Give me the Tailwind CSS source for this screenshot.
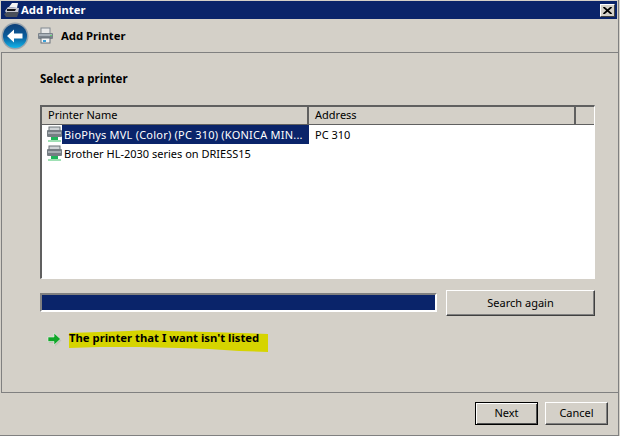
<!DOCTYPE html>
<html lang="en">
<head>
    <meta charset="UTF-8">
    <title>Add Printer</title>
    <script src="https://cdn.jsdelivr.net/npm/@tailwindcss/browser@4"></script>
</head>
<body class="bg-[#d4d0c8] font-['Noto_Sans','Liberation_Sans',sans-serif] text-[11px] text-black overflow-hidden">
    <div class="w-[619px] h-[436px] flex flex-col border-r border-b border-[#808080] pt-px">
        <!-- title bar -->
        <div class="h-[18px] ml-px mr-px bg-[#0a246a] flex items-center text-white font-bold text-[11.3px] shrink-0">
            <svg class="w-[17px] h-[16px] ml-[2px] mr-[1px]" viewBox="0 0 17 16">
                <path d="M6 5 L9 1 L15 1 L14 6 Z" fill="#f4f4f4"/>
                <path d="M2 9 L5 5 L16 6 L15 11 L4 12 Z" fill="#c8c8d0"/>
                <path d="M1 12 L4 10 L16 10 L14 15 L3 15 Z" fill="#4a4f5a"/>
                <path d="M4 7 L13 7 L12 9 L4 9 Z" fill="#15151a"/>
            </svg>
            <span class="leading-none">Add Printer</span>
            <button class="ml-auto mr-[2px] w-[15px] h-[13px] bg-[#d4d0c8] border border-white border-r-[#404040] border-b-[#404040] flex items-center justify-center">
                <svg class="w-[9px] h-[7px]" viewBox="0 0 9 7"><path d="M0.5 0 L8.5 7 M8.5 0 L0.5 7" stroke="#000" stroke-width="1.8"/></svg>
            </button>
        </div>

        <!-- header with back button -->
        <div class="h-[33px] flex items-center shrink-0 pl-[1px]">
            <svg class="w-[28px] h-[28px]" viewBox="0 0 28 28">
                <defs>
                    <linearGradient id="backFill" x1="0" y1="0" x2="0" y2="1">
                        <stop offset="0" stop-color="#0d3f78"/>
                        <stop offset="0.55" stop-color="#0a5f9e"/>
                        <stop offset="1" stop-color="#12b5ea"/>
                    </linearGradient>
                </defs>
                <circle cx="14" cy="14" r="13.5" fill="#9aa4ac"/>
                <circle cx="14" cy="14" r="12" fill="url(#backFill)"/>
                <path d="M6 14 L13 7.5 L13 11.5 L21.5 11.5 L21.5 16.5 L13 16.5 L13 20.5 Z" fill="#fff"/>
            </svg>
            <svg class="w-[17px] h-[17px] ml-[8px]" viewBox="0 0 17 17">
                <rect x="4" y="1" width="9" height="6" fill="#e8e8e8" stroke="#808890"/>
                <rect x="1" y="6" width="15" height="6" rx="1" fill="#7b838b"/>
                <rect x="2" y="7" width="13" height="2" fill="#a8b0b8"/>
                <rect x="4" y="11" width="9" height="5" fill="#f4f4f4" stroke="#68707a"/>
                <rect x="6" y="13" width="3" height="2" fill="#3aa0d8"/>
                <rect x="13" y="8" width="2" height="1" fill="#5fd070"/>
            </svg>
            <span class="ml-[7px] font-bold text-[11.3px] leading-none">Add Printer</span>
        </div>

        <!-- content panel -->
        <div class="h-[341px] shrink-0 border-y border-l border-[#808080] ml-px pl-[38px] pr-[22px] flex flex-col relative">
            <h2 class="font-bold text-[11.5px] leading-none mt-[20px]">Select a printer</h2>

            <div class="mt-[20px] w-[555px] h-[174px] bg-white border-t-2 border-l-2 border-t-[#606060] border-l-[#606060] border-r border-b border-r-white border-b-white flex flex-col">
                <div class="h-[18px] flex bg-[#d4d0c8] border-b border-[#606060] shrink-0">
                    <div class="w-[267px] pl-[6px] border-r-2 border-[#606060] leading-[15px]">Printer Name</div>
                    <div class="w-[267px] pl-[6px] border-r-2 border-[#606060] leading-[15px]">Address</div>
                    <div class="flex-1"></div>
                </div>
                <div class="h-[19px] flex items-center">
                    <svg class="w-[17px] h-[17px] ml-[4px] mr-[-1px] shrink-0" viewBox="0 0 17 17">
                        <rect x="3" y="1" width="11" height="4" fill="#cfd3d6" stroke="#6c7478"/>
                        <rect x="1" y="4" width="15" height="7" rx="1" fill="#757d83"/>
                        <rect x="2" y="6" width="13" height="2" fill="#a7adb2"/>
                        <rect x="5" y="11" width="7" height="3" fill="#1fb45a"/>
                        <rect x="2" y="14" width="13" height="2" fill="#9fe0b4"/>
                    </svg>
                    <div class="w-[247px] h-full bg-[#0a246a] text-white pl-[2px] leading-[19px] tracking-[0.22px] whitespace-nowrap shrink-0">BioPhys MVL (Color) (PC 310) (KONICA MIN...</div>
                    <div class="pl-[6px] leading-[19px]">PC 310</div>
                </div>
                <div class="h-[19px] flex items-center">
                    <svg class="w-[17px] h-[17px] ml-[4px] mr-[-1px] shrink-0" viewBox="0 0 17 17">
                        <rect x="3" y="1" width="11" height="4" fill="#cfd3d6" stroke="#6c7478"/>
                        <rect x="1" y="4" width="15" height="7" rx="1" fill="#757d83"/>
                        <rect x="2" y="6" width="13" height="2" fill="#a7adb2"/>
                        <rect x="5" y="11" width="7" height="3" fill="#1fb45a"/>
                        <rect x="2" y="14" width="13" height="2" fill="#9fe0b4"/>
                    </svg>
                    <div class="pl-[2px] leading-[19px] whitespace-nowrap">Brother HL-2030 series on DRIESS15</div>
                </div>
            </div>

            <div class="mt-[11px] flex items-start w-[555px]">
                <div class="mt-[3px] w-[397px] h-[19px] bg-[#0a246a] border-2 border-t-[#808080] border-l-[#808080] border-r-white border-b-white shrink-0"></div>
                <button class="ml-[9px] w-[149px] h-[26px] pt-[1px] bg-[#d4d0c8] border border-t-white border-l-white border-r-[#404040] border-b-[#404040] shadow-[inset_-1px_-1px_0_#808080]">Search again</button>
            </div>

            <div class="mt-[14px] relative flex items-center h-[18px]">
                <!-- hand drawn marker over the link -->
                <svg class="absolute left-[29px] top-[-1px] w-[200px] h-[24px]" viewBox="0 0 200 24">
                    <path d="M0 4 L30 3 L60 2 L77 1 L100 2 L140 3 L199 5 L199 23 L170 22 L140 20 L110 19 L70 18 L30 18 L0 19 Z" fill="#d6d400"/>
                </svg>
                <svg class="relative w-[15px] h-[15px] ml-[7px] mt-[2px]" viewBox="0 0 15 15">
                    <path d="M2 7 L8 7 L8 3 L14.5 8.5 L8 14.5 L8 11 L2 11 Z" fill="#c4c0b8"/>
                    <path d="M1 5 L7 5 L7 1 L13.5 7 L7 13 L7 9.5 L1 9.5 Z" fill="#12a62a" stroke="#e8f5e8" stroke-width="0.6"/>
                </svg>
                <span class="relative ml-[7px] font-bold text-[11.3px]">The printer that I want isn't listed</span>
            </div>
        </div>

        <!-- footer buttons -->
        <div class="flex justify-end gap-[7px] pt-[9px] pr-[10px]">
            <button class="w-[63px] h-[23px] bg-[#d4d0c8] border border-black shadow-[inset_1px_1px_0_#fff,inset_-1px_-1px_0_#505050]">Next</button>
            <button class="w-[63px] h-[23px] bg-[#d4d0c8] border border-t-white border-l-white border-r-[#404040] border-b-[#404040] shadow-[inset_-1px_-1px_0_#808080]">Cancel</button>
        </div>
    </div>
</body>
</html>
